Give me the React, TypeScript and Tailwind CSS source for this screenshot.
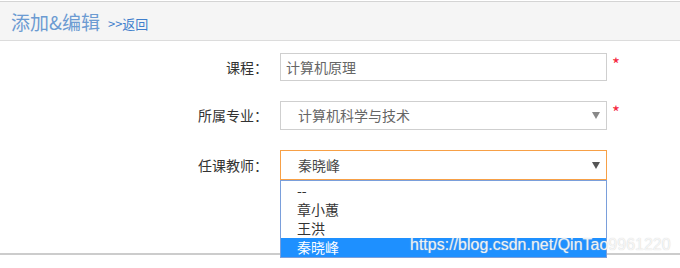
import { useState } from 'react';

const teachers = ['--', '章小蕙', '王洪', '秦晓峰'];

function Caret({ color }: { color: string }) {
  return (
    <svg width="8" height="7" viewBox="0 0 8 7">
      <path d="M0 0h8L4 7z" fill={color} />
    </svg>
  );
}

export default function App() {
  const [course, setCourse] = useState('计算机原理');
  const [selected] = useState('秦晓峰');

  return (
    <div className="relative w-[680px] h-[268px] bg-white overflow-hidden font-['Noto_Sans_CJK_SC','Noto_Sans',sans-serif]">
      <div className="mt-px border-t border-b border-[#d4d4d4] border-b-[#dcdcdc] bg-[#f5f5f5] h-[40px] flex items-center pl-[11px] gap-[8px]">
        <h2 className="text-[19px] text-[#6c9bd2] leading-none">添加&amp;编辑</h2>
        <a className="text-[13px] text-[#3f7fcc] leading-none mt-[4px]">&gt;&gt;返回</a>
      </div>

      <div className="h-[214px] border-b-2 border-[#cccccc] pt-[12px] flex flex-col gap-[20px] text-[14px] text-[#333]">
        <div className="flex items-center">
          <label className="w-[280px] pr-[12px] text-right">课程：</label>
          <input
            value={course}
            onChange={e => setCourse(e.target.value)}
            className="w-[327px] h-[28px] border border-[#cfcfcf] px-[5px] text-[14px] text-[#666] outline-none"
          />
          <span className="self-start ml-[5px] mt-[2px] text-[17px] leading-none text-[#f5273d]">*</span>
        </div>

        <div className="flex items-center">
          <label className="w-[280px] pr-[12px] text-right">所属专业：</label>
          <div className="w-[327px] h-[29px] border border-[#cfcfcf] pl-[17px] pr-[6px] flex items-center justify-between text-[#666]">
            <span>计算机科学与技术</span>
            <Caret color="#888" />
          </div>
          <span className="self-start ml-[5px] mt-[2px] text-[17px] leading-none text-[#f5273d]">*</span>
        </div>

        <div className="flex items-center">
          <label className="w-[280px] pr-[12px] text-right">任课教师：</label>
          <div className="relative">
            <div className="w-[327px] h-[30px] border border-[#f7a046] pl-[17px] pr-[6px] flex items-center justify-between text-[#444]">
              <span>{selected}</span>
              <Caret color="#555" />
            </div>
            <ul className="absolute left-0 top-[30px] w-[327px] border border-[#7a9fdb] bg-white z-10">
              {teachers.map(t => (
                <li
                  key={t}
                  className={`h-[19px] leading-[19px] pl-[16px] ${t === selected ? 'bg-[#1e90ff] text-white' : 'text-[#333]'}`}
                >
                  {t}
                </li>
              ))}
            </ul>
          </div>
        </div>
      </div>

      <div className="absolute left-[410px] top-[237px] z-20 text-[16px] leading-none text-[#ffffffcc] [text-shadow:0_0_1px_#c8c8c8] font-['Liberation_Sans',sans-serif]">
        https://blog.csdn.net/QinTao9961220
      </div>
    </div>
  );
}
